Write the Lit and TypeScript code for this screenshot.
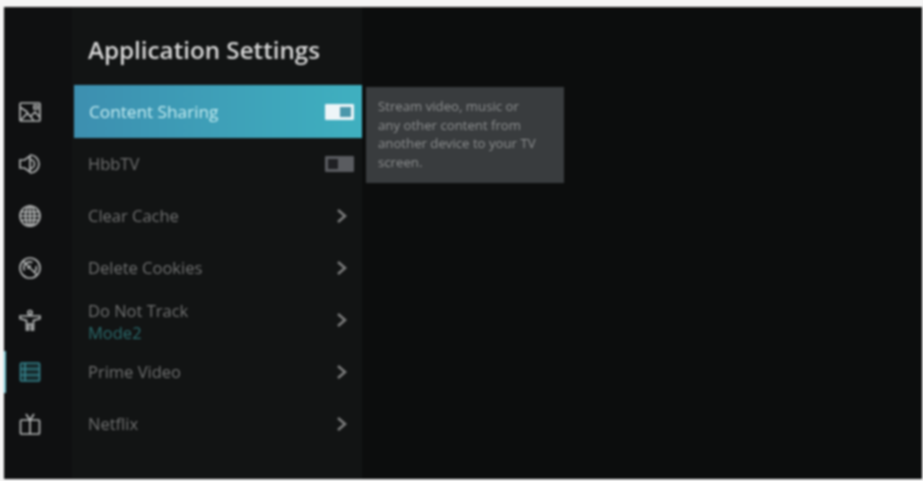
import { LitElement, html, css, svg } from "lit";
import { customElement } from "lit/decorators.js";

const icons = [
  svg`<rect x="2" y="3" width="20" height="18" rx="1"/><path d="M2.500 7.500l7 4.500M3 20l6.500-7 6 7M13 16l4-4 4.500 5M16 5.500h3.500v3.500H16z"/>`,
  svg`<path d="M12 4v16L6.500 16H2V8h4.500zM12 3a9 9 0 0 1 0 18M12 7.500a4.500 4.500 0 0 1 0 9"/>`,
  svg`<circle cx="12" cy="12" r="10"/><ellipse cx="12" cy="12" rx="4.500" ry="10"/><path d="M2.500 8h19M2 12h20M2.500 16h19M12 2v20"/>`,
  svg`<circle cx="12" cy="12" r="10"/><path d="M5 5l14 14M6.500 14.500a6 6 0 0 1 8-8M18 10a6 6 0 0 1-2 6.500M10 13a3 3 0 0 1 3-3"/>`,
  svg`<circle cx="12" cy="4.500" r="2"/><path d="M2 8h20v2.500l-6.500 2V22h-2v-6h-3v6h-2v-9.500L2 10.500z"/>`,
  svg`<rect class="tint" x="2.500" y="3" width="19" height="18" rx="1"/><path d="M2.500 9h19M2.500 15h19M7 3v18"/>`,
  svg`<rect x="2.500" y="8" width="19" height="14" rx="1"/><path d="M8 2l4 6 4-6M12 8v14"/>`,
];

const rows = [
  { label: "Content Sharing", kind: "toggle-on", active: true },
  { label: "HbbTV", kind: "toggle-off" },
  { label: "Clear Cache", kind: "chevron" },
  { label: "Delete Cookies", kind: "chevron" },
  { label: "Do Not Track", sub: "Mode2", kind: "chevron" },
  { label: "Prime Video", kind: "chevron" },
  { label: "Netflix", kind: "chevron" },
];

@customElement("app-root")
export class AppRoot extends LitElement {
  static styles = css`
    :host {
      display: block;
      width: 923px;
      height: 481px;
      background: #f4f4f4;
      box-sizing: border-box;
      padding: 7px 1px 2px 4px;
      font-family: "Open Sans", "Noto Sans", sans-serif;
      overflow: hidden;
    }
    .screen {
      display: flex;
      height: 100%;
      background: #0c0d0d;
      filter: blur(0.8px);
    }
    .rail {
      width: 68px;
      flex: none;
      padding-top: 79px;
      background: #0f1011;
      box-sizing: border-box;
    }
    .rail-item {
      height: 52px;
      display: flex;
      align-items: center;
      justify-content: center;
      padding-right: 17px;
      box-sizing: border-box;
      color: #b4b6b6;
      position: relative;
    }
    .rail-item svg {
      width: 24px;
      height: 24px;
      fill: none;
      stroke: currentColor;
      stroke-width: 1.700;
    }
    .rail-item .tint { fill: rgba(44, 109, 116, 0.3); }
    .rail-item.on { color: #35808a; }
    .rail-item.on::before {
      content: "";
      position: absolute;
      left: 0;
      top: 5px;
      width: 2px;
      height: 42px;
      background: #77c4d0;
    }
    .panel {
      width: 290px;
      flex: none;
      background: #121414;
      box-sizing: border-box;
      padding: 25px 0 0 2px;
    }
    h1 {
      margin: 0 0 17px 14px;
      height: 36px;
      font-size: 24.200px;
      line-height: 36px;
      font-weight: 600;
      color: #d8d8d8;
      white-space: nowrap;
    }
    .row {
      height: 52px;
      display: flex;
      align-items: center;
      justify-content: space-between;
      padding: 0 8px 0 14px;
      box-sizing: border-box;
      color: #707171;
      font-size: 16.500px;
    }
    .row.active {
      height: 53px;
      padding-left: 15px;
      background: linear-gradient(90deg, #3d8fb0, #3fb0c0);
      color: #c5ecf0;
      font-weight: 500;
      font-size: 17.200px;
    }
    .text { line-height: 22px; }
    .text.two { margin-top: 4px; }
    .sub { color: #2a6a6c; }
    .chev {
      width: 16px;
      height: 16px;
      fill: none;
      stroke: #7a7b7b;
      stroke-width: 2.600;
      margin-right: 4px;
    }
    .toggle {
      width: 29px;
      height: 16px;
      box-sizing: border-box;
      padding: 3px;
      border-radius: 1px;
      display: flex;
      justify-content: flex-end;
      background: #5a5c60;
    }
    .toggle span {
      width: 11px;
      height: 10px;
      background: #1f2023;
      margin-right: 13px;
    }
    .toggle.on { background: #eef5f8; }
    .toggle.on span { background: #4b97ab; margin-right: 0; }
    .right { flex: 1; padding: 80px 0 0 4px; }
    .tip {
      width: 198px;
      height: 96px;
      box-sizing: border-box;
      padding: 10px 26px 0 12px;
      background: #393c3e;
      color: #8c8e8f;
      font-size: 13.200px;
      line-height: 18.600px;
    }
  `;

  render() {
    return html`<div class="screen">
      <nav class="rail">
        ${icons.map(
          (i, n) => html`<div class="rail-item ${n === 5 ? "on" : ""}"><svg viewBox="0 0 24 24">${i}</svg></div>`
        )}
      </nav>
      <section class="panel">
        <h1>Application Settings</h1>
        ${rows.map(
          (r) => html`<div class="row ${r.active ? "active" : ""}">
            <div class="text ${r.sub ? "two" : ""}">
              <div>${r.label}</div>
              ${r.sub ? html`<div class="sub">${r.sub}</div>` : ""}
            </div>
            ${r.kind === "chevron"
              ? html`<svg class="chev" viewBox="0 0 16 16"><path d="M4 2l7 6-7 6"/></svg>`
              : html`<div class="toggle ${r.kind === "toggle-on" ? "on" : ""}"><span></span></div>`}
          </div>`
        )}
      </section>
      <div class="right">
        <div class="tip">Stream video, music or any other content from another device to your TV screen.</div>
      </div>
    </div>`;
  }
}
